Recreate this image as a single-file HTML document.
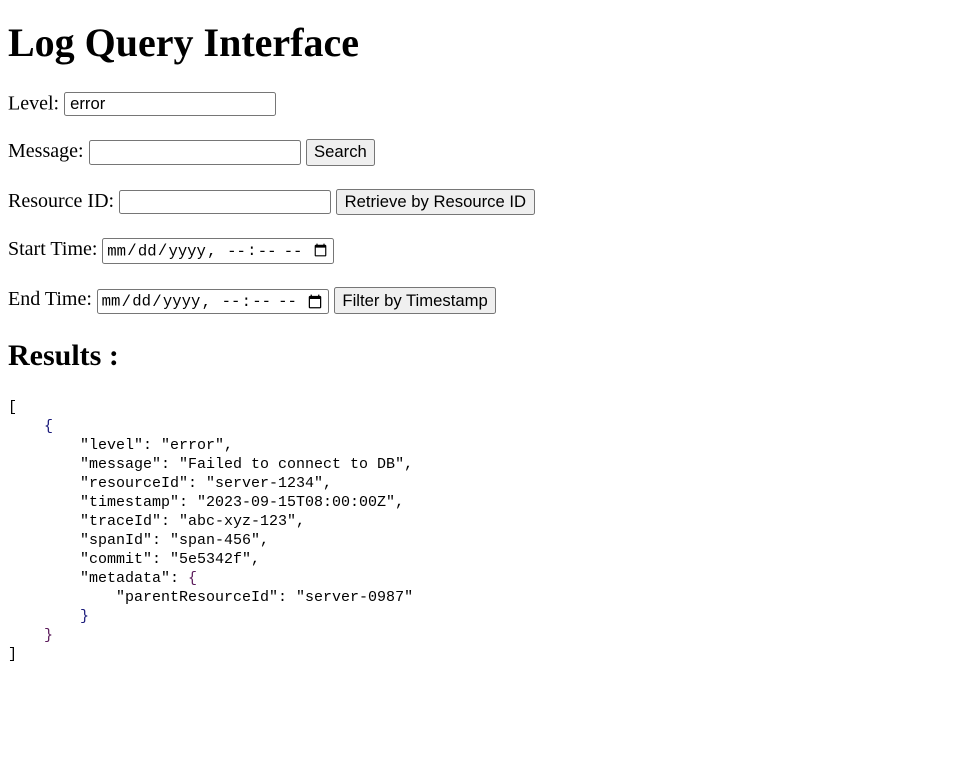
<!DOCTYPE html>
<html><head><meta charset="utf-8"><style>
html{zoom:1.25}
body{margin:6.4px;font-family:"Liberation Serif",serif;font-size:16px;color:#000;background:#fff}
h1{font-size:32px;margin:15px 0 20.6px}
h2{font-size:24px;margin:19.92px 0}
p{margin:18.6px 0}
input[type=text]{font-family:"Liberation Sans",sans-serif;font-size:13.33px;width:160px;border:1px solid #767676;border-radius:2px;padding:2px 4px;height:14px;box-sizing:content-box;vertical-align:baseline}
input[type=datetime-local]{font-family:"Liberation Mono",monospace;font-size:12.5px;border:1px solid #767676;border-radius:2px;padding:1px 2px;width:180px;height:17px;box-sizing:content-box}
button{font-family:"Liberation Sans",sans-serif;font-size:13.33px;padding:1px 6px;border:1px solid #767676;border-radius:2px;background:#efefef;height:21px}
pre{font-family:"Liberation Mono",monospace;font-size:12px;line-height:15.2px;margin:13px 0}
.b{color:#1a1a7a}.c{color:#5a1a5a}
</style></head><body>
<h1>Log Query Interface</h1>
<p>Level: <input type="text" value="error"></p>
<p>Message: <input type="text"> <button>Search</button></p>
<p>Resource ID: <input type="text"> <button>Retrieve by Resource ID</button></p>
<p>Start Time: <input type="datetime-local"></p>
<p>End Time: <input type="datetime-local"> <button>Filter by Timestamp</button></p>
<h2>Results :</h2>
<pre>[
    <span class="b">{</span>
        "level": "error",
        "message": "Failed to connect to DB",
        "resourceId": "server-1234",
        "timestamp": "2023-09-15T08:00:00Z",
        "traceId": "abc-xyz-123",
        "spanId": "span-456",
        "commit": "5e5342f",
        "metadata": <span class="c">{</span>
            "parentResourceId": "server-0987"
        <span class="b">}</span>
    <span class="c">}</span>
]</pre>
</body></html>
